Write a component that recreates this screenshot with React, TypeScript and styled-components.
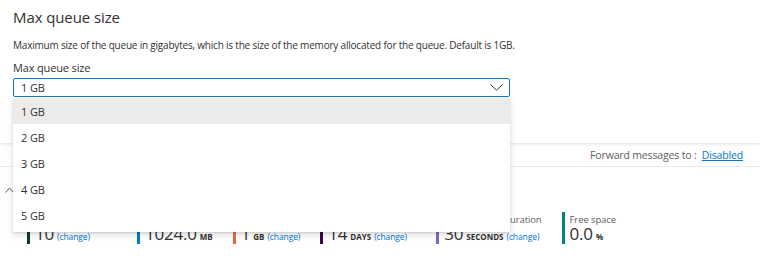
import React, {FC} from "react";
import styled, {createGlobalStyle} from "styled-components";

const GlobalStyle = createGlobalStyle`
  html, body {
    margin: 0;
    padding: 0;
    background: #ffffff;
  }

  body {
    font-family: "Open Sans", "Noto Sans", sans-serif;
    color: #323130;
    width: 760px;
    height: 256px;
    overflow: hidden;
  }
`;

const StyledPanel = styled.section`
  position: relative;
  z-index: 2;
  height: 143px;
  padding: 8px 13px 0;
  box-sizing: border-box;
  background: #ffffff;
  box-shadow: 0 1px 3px rgba(0, 0, 0, 0.12);
`;

const StyledTitle = styled.h2`
  margin: 0;
  font-size: 15px;
  font-weight: 400;
  line-height: 18px;
  letter-spacing: -0.1px;
  color: #323130;
`;

const StyledDescription = styled.p`
  margin: 12px 0 0;
  font-size: 10px;
  line-height: 14px;
  letter-spacing: -0.2px;
`;

const StyledLabel = styled.label`
  display: block;
  margin-top: 9px;
  font-size: 11px;
  line-height: 14px;
  letter-spacing: -0.15px;
`;

const StyledField = styled.div`
  position: relative;
  width: 497px;
  margin-top: 3px;
`;

const StyledSelect = styled.div`
  display: flex;
  align-items: center;
  justify-content: space-between;
  height: 19px;
  padding: 0 6px 0 7px;
  box-sizing: border-box;
  border: 1.5px solid #0078d4;
  border-radius: 2px;
  font-size: 11px;
  letter-spacing: -0.1px;
`;

const StyledMenu = styled.ul`
  position: absolute;
  top: 100%;
  left: 0;
  right: 0;
  margin: 1px 0 0;
  padding: 0 0 4px;
  list-style: none;
  background: #ffffff;
  box-shadow: 0 3px 7px rgba(0, 0, 0, 0.13), 0 0.6px 1.8px rgba(0, 0, 0, 0.11);
`;

const StyledOption = styled.li<{ $active?: boolean }>`
  height: 26px;
  padding: 0 8px;
  display: flex;
  align-items: center;
  font-size: 11px;
  letter-spacing: -0.1px;
  color: #323130;
  background: ${p => (p.$active ? "#edebe9" : "transparent")};
`;

const StyledForwardBar = styled.div`
  display: flex;
  justify-content: flex-end;
  align-items: center;
  height: 23px;
  padding-right: 17px;
  border-bottom: 1px solid #edebe9;
  font-size: 10.5px;
  letter-spacing: -0.15px;
  color: #605e5c;
`;

const StyledLink = styled.a`
  color: #0078d4;
  text-decoration: underline;
  margin-left: 5px;
`;

const StyledToggle = styled.div`
  height: 45px;
  padding-left: 5px;
  display: flex;
  align-items: center;
`;

const StyledMetrics = styled.div`
  display: flex;
  gap: 20px;
  padding-left: 27px;
`;

const StyledMetric = styled.div<{ $color: string }>`
  border-left: 3px solid ${p => p.$color};
  padding-left: 5px;
  height: 32px;
  display: flex;
  flex-direction: column;
  justify-content: space-between;
`;

const StyledMetricLabel = styled.div`
  font-size: 9.5px;
  line-height: 13px;
  letter-spacing: -0.1px;
  color: #605e5c;
  white-space: nowrap;
  margin-top: 1px;
`;

const StyledMetricValue = styled.div`
  display: flex;
  align-items: baseline;
  gap: 3px;
  white-space: nowrap;
  line-height: 15px;
`;

const StyledNumber = styled.span`
  font-size: 17px;
  letter-spacing: -0.2px;
  color: #323130;
`;

const StyledUnit = styled.span`
  font-size: 8px;
  font-weight: 700;
  text-transform: uppercase;
  color: #323130;
`;

const StyledChange = styled.a`
  font-size: 8.5px;
  letter-spacing: -0.1px;
  color: #0078d4;
`;

interface IMetric {
    label: string;
    value: string;
    unit?: string;
    change?: boolean;
    color: string;
}

const metrics: IMetric[] = [
    {label: "Max delivery count", value: "10", change: true, color: "#0b3a2c"},
    {label: "Current size", value: "1024.0", unit: "MB", color: "#0078d4"},
    {label: "Max size", value: "1", unit: "GB", change: true, color: "#e8684f"},
    {label: "Message time to live", value: "14", unit: "days", change: true, color: "#3b0a45"},
    {label: "Message lock duration", value: "30", unit: "seconds", change: true, color: "#8764b8"},
    {label: "Free space", value: "0.0", unit: "%", color: "#038387"},
];

const sizes: string[] = ["1 GB", "2 GB", "3 GB", "4 GB", "5 GB"];

const Metric: FC<{ metric: IMetric }> = ({metric}) => (
    <StyledMetric $color={metric.color}>
        <StyledMetricLabel>{metric.label}</StyledMetricLabel>
        <StyledMetricValue>
            <StyledNumber>{metric.value}</StyledNumber>
            {metric.unit && <StyledUnit>{metric.unit}</StyledUnit>}
            {metric.change && <StyledChange>(change)</StyledChange>}
        </StyledMetricValue>
    </StyledMetric>
);

const App: FC = () => {
    return (
        <>
            <GlobalStyle/>
            <StyledPanel>
                <StyledTitle>Max queue size</StyledTitle>
                <StyledDescription>
                    Maximum size of the queue in gigabytes, which is the size of the memory allocated for the
                    queue. Default is 1GB.
                </StyledDescription>
                <StyledLabel>Max queue size</StyledLabel>
                <StyledField>
                    <StyledSelect>
                        <span>1 GB</span>
                        <svg width="13" height="7" viewBox="0 0 13 7" fill="none">
                            <path d="M0.5 0.5L6.5 6.2L12.5 0.5" stroke="#323130" strokeWidth="1"/>
                        </svg>
                    </StyledSelect>
                    <StyledMenu>
                        {sizes.map((size, i) => (
                            <StyledOption key={size} $active={i === 0}>{size}</StyledOption>
                        ))}
                    </StyledMenu>
                </StyledField>
            </StyledPanel>
            <StyledForwardBar>
                Forward messages to&nbsp;:
                <StyledLink>Disabled</StyledLink>
            </StyledForwardBar>
            <StyledToggle>
                <svg width="9" height="6" viewBox="0 0 9 6" fill="none">
                    <path d="M0.5 5.5L4.5 1L8.5 5.5" stroke="#605e5c" strokeWidth="1"/>
                </svg>
            </StyledToggle>
            <StyledMetrics>
                {metrics.map(m => <Metric key={m.label} metric={m}/>)}
            </StyledMetrics>
        </>
    );
};

export default App;
